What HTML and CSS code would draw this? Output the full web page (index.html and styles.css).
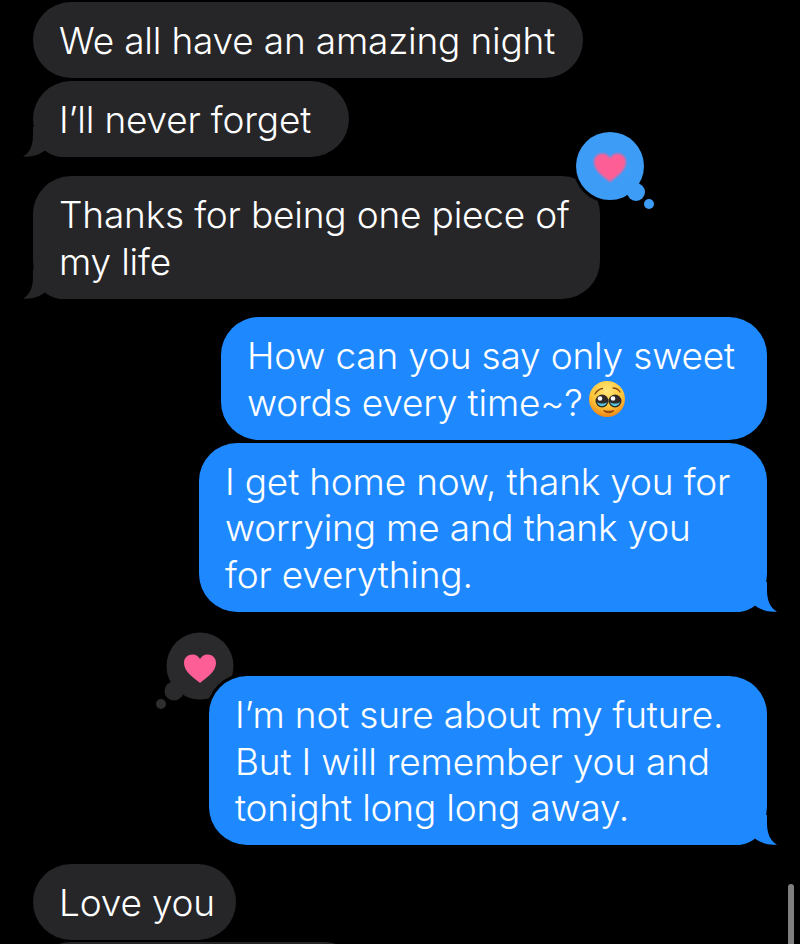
FILE: index.html
```html
<!DOCTYPE html>
<html lang="en">
<head>
  <meta charset="UTF-8">
  <title>Messages</title>
  <link rel="stylesheet" href="styles.css">
</head>
<body>
  <div class="thread">
    <div class="bubble in w-first">We all have an amazing night</div>
    <div class="bubble in w-forget gap-s">I’ll never forget
      <svg class="tail tail-in" viewBox="0 0 50 30"><path d="M10 0L10 8C10 18 7 26 0 29.500C8 30.500 16 28 22 23.500C27 27.500 33 30 40 30L50 30L50 0Z"/></svg>
    </div>
    <div class="bubble in w-thanks gap-m">Thanks for being one piece of<br>my life
      <svg class="tail tail-in" viewBox="0 0 50 30"><path d="M10 0L10 8C10 18 7 26 0 29.500C8 30.500 16 28 22 23.500C27 27.500 33 30 40 30L50 30L50 0Z"/></svg>
      <svg class="tapback tapback-blue" viewBox="0 0 90 90">
        <circle class="ring" cx="37" cy="37" r="37"/>
        <circle class="fill" cx="37" cy="37" r="34"/>
        <circle class="fill" cx="63" cy="63" r="9"/>
        <circle class="fill" cx="76" cy="75" r="5"/>
        <path class="heart soft" d="M37 53C31 48 21 42 21 33C21 27.500 25 24.500 29.500 24.500C33 24.500 35.500 26.500 37 29C38.500 26.500 41 24.500 44.500 24.500C49 24.500 53 27.500 53 33C53 42 43 48 37 53Z"/>
      </svg>
    </div>

    <div class="bubble out w-sweet gap-n">How can you say only sweet<br>words every time~?<svg class="emoji" viewBox="0 0 36 36">
        <defs>
          <radialGradient id="face" cx="50%" cy="28%" r="75%">
            <stop offset="0" stop-color="#ffe676"/>
            <stop offset="0.6" stop-color="#fdc437"/>
            <stop offset="1" stop-color="#ec7f14"/>
          </radialGradient>
        </defs>
        <circle cx="18" cy="18" r="18" fill="url(#face)"/>
        <path d="M6 13C8 9.500 10.500 8 13.500 7.500M31 11C29.500 8.500 27 7 24 7" fill="none" stroke="#8a4b12" stroke-width="1.300" stroke-linecap="round"/>
        <circle cx="13" cy="20" r="6.500" fill="#2f2a28"/>
        <circle cx="26" cy="20" r="6.500" fill="#2f2a28"/>
        <path d="M8 21C9 26.500 17 26.500 18 21C16 23 10 23 8 21ZM21 21C22 26.500 30 26.500 31 21C29 23 23 23 21 21Z" fill="#58c8e0"/>
        <circle cx="11" cy="17.500" r="2.300" fill="#fff"/>
        <circle cx="24" cy="17.500" r="2.300" fill="#fff"/>
        <path d="M14.500 29.500C17 32.500 22.500 32.500 25 29.500C22 30.500 17.500 30.500 14.500 29.500Z" fill="#8f4310" stroke="#8f4310" stroke-width="0.800"/>
      </svg>
    </div>
    <div class="bubble out w-home gap-s">I get home now, thank you for<br>worrying me and thank you<br>for everything.
      <svg class="tail tail-out" viewBox="0 0 50 30"><path d="M10 0L10 8C10 18 7 26 0 29.500C8 30.500 16 28 22 23.500C27 27.500 33 30 40 30L50 30L50 0Z"/></svg>
    </div>
    <div class="bubble out w-future gap-l">I’m not sure about my future.<br>But I will remember you and<br>tonight long long away.
      <svg class="tail tail-out" viewBox="0 0 50 30"><path d="M10 0L10 8C10 18 7 26 0 29.500C8 30.500 16 28 22 23.500C27 27.500 33 30 40 30L50 30L50 0Z"/></svg>
      <svg class="tapback tapback-gray" viewBox="0 0 90 90">
        <circle class="fill" cx="51" cy="35" r="33.500"/>
        <circle class="fill" cx="25" cy="60" r="9.500"/>
        <circle class="dot" cx="12" cy="73" r="5"/>
        <circle class="ring" cx="98" cy="83" r="41"/>
        <path class="heart" d="M51 52C45 47 35 41 35 32C35 26.500 39 23.500 43.500 23.500C47 23.500 49.500 25.500 51 28C52.500 25.500 55 23.500 58.500 23.500C63 23.500 67 26.500 67 32C67 41 57 47 51 52Z"/>
      </svg>
    </div>

    <div class="bubble in w-love gap-m">Love you</div>
    <div class="bubble in w-next gap-t">&nbsp;</div>
  </div>
  <div class="scrollbar"></div>
</body>
</html>
```

FILE: styles.css
```css
html, body {
  height: 100%;
}

body {
  margin: 0;
  background: #000;
  color: #fff;
  font-family: Inter, "Liberation Sans", sans-serif;
}

.thread {
  box-sizing: border-box;
  height: 100%;
  overflow: hidden;
  display: flex;
  flex-direction: column;
  align-items: flex-start;
  padding: 2px 33px 0;
}

.bubble {
  position: relative;
  box-sizing: border-box;
  padding: 16px 0 13.5px 26px;
  border-radius: 38px;
  font-size: 37px;
  font-weight: 360;
  line-height: 46.5px;
  letter-spacing: -0.18px;
  white-space: nowrap;
  flex-shrink: 0;
}

.in {
  background: #262629;
}

.out {
  align-self: flex-end;
  background: #1e89ff;
}

.w-first { width: 550px; }
.w-forget { width: 316px; }
.w-thanks { width: 567px; }
.w-sweet { width: 546px; }
.w-home { width: 568px; }
.w-future { width: 558px; }
.w-love { width: 203px; }
.w-next { width: 329px; }

.gap-t { margin-top: 2px; }
.gap-s { margin-top: 3px; }
.gap-n { margin-top: 18.5px; }
.gap-m { margin-top: 19px; }
.gap-l { margin-top: 64.5px; }

.tail {
  position: absolute;
  bottom: 0;
  width: 50px;
  height: 30px;
  z-index: -1;
}

.tail-in {
  left: -10px;
  fill: #262629;
}

.tail-out {
  right: -10px;
  fill: #1e89ff;
  transform: scaleX(-1);
}

.tapback {
  position: absolute;
  width: 90px;
  height: 90px;
}

.tapback-blue {
  left: 540px;
  top: -47px;
}

.tapback-gray {
  left: -60px;
  top: -45px;
  z-index: -1;
}

.tapback .ring { fill: #000; }
.tapback-blue .fill { fill: #3d9df6; }
.tapback-gray .fill { fill: #2a2a2c; }
.tapback-gray .dot { fill: #2e2e30; }

.heart {
  fill: #fd5e95;
}

.heart.soft {
  filter: blur(0.8px);
}

.emoji {
  width: 36px;
  height: 36px;
  margin-left: 6px;
  vertical-align: -1px;
}

.scrollbar {
  position: absolute;
  left: 788px;
  top: 884px;
  width: 6px;
  height: 60px;
  border-radius: 3px 3px 0 0;
  background: #7f7f7f;
}
```
